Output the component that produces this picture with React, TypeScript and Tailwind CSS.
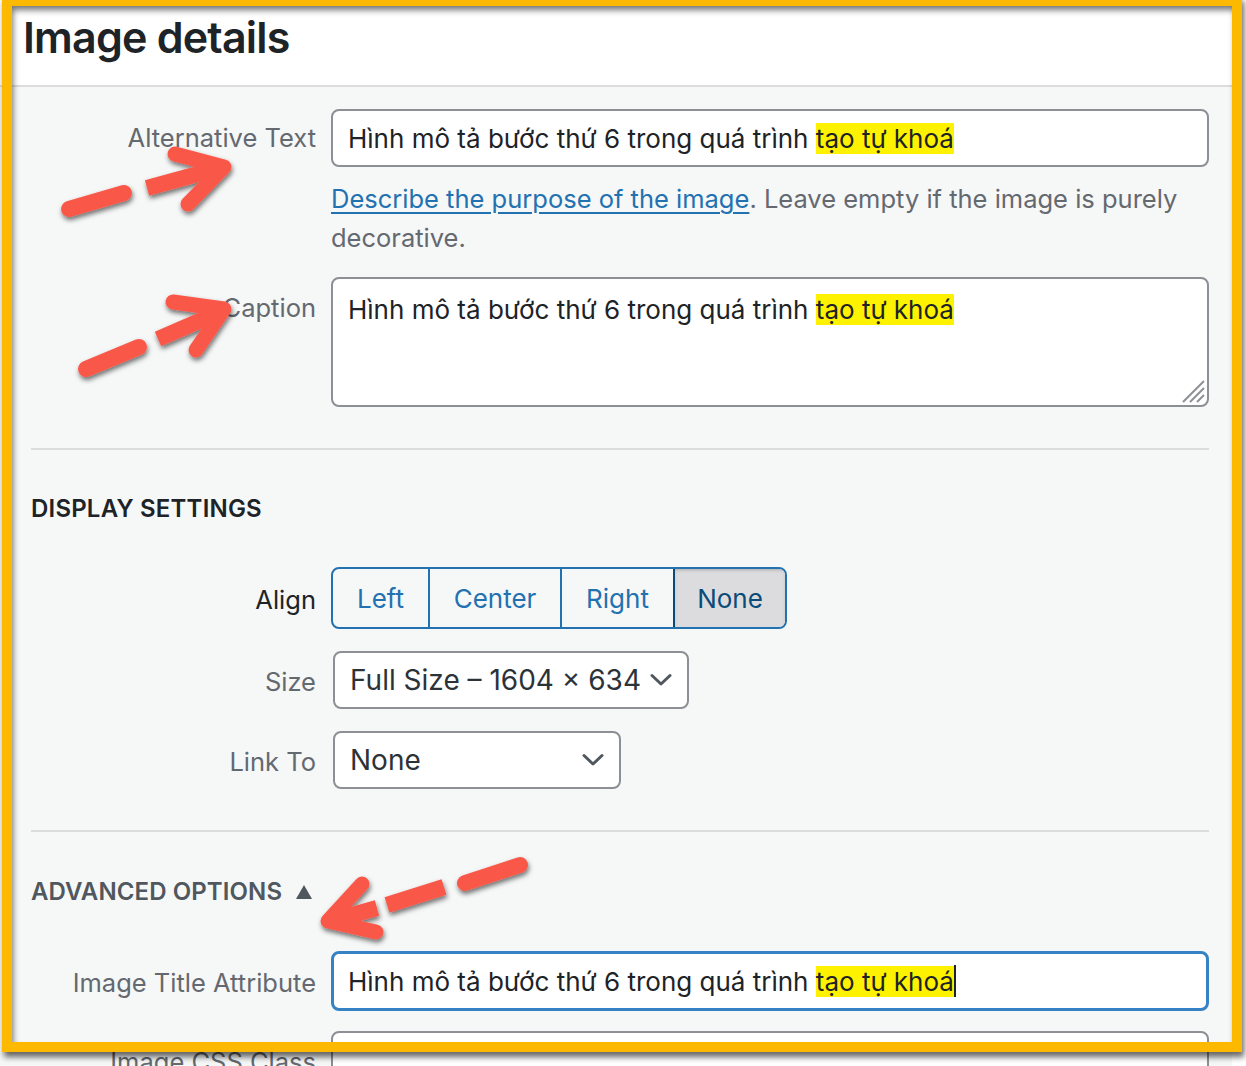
import type { ReactNode } from "react";

const font = "font-['Inter','Noto_Sans',sans-serif]";

function Mark({ children }: { children: ReactNode }) {
  return <span className="bg-[#fff200]">{children}</span>;
}

function Caption() {
  return (
    <span>
      Hình mô tả bước thứ 6 trong quá trình <Mark>tạo tự khoá</Mark>
    </span>
  );
}

function Row({ label, labelTop, children }: { label: string; labelTop?: boolean; children: ReactNode }) {
  return (
    <div className="flex items-start gap-[15px]">
      <div
        className={`w-[285px] shrink-0 text-right text-[25.5px] leading-[36px] text-[#646970] ${
          labelTop ? "pt-[13px]" : "h-[58px] flex items-center justify-end"
        }`}
      >
        {label}
      </div>
      <div className="flex-1 min-w-0">{children}</div>
    </div>
  );
}

function Chevron() {
  return (
    <svg width="22" height="14" viewBox="0 0 22 14" fill="none">
      <path d="M2 2.5 L11 11 L20 2.5" stroke="#50575e" strokeWidth="3" strokeLinecap="round" strokeLinejoin="round" />
    </svg>
  );
}

function Arrows() {
  const red = "#f9594a";
  return (
    <svg className="absolute inset-0 pointer-events-none" width="1246" height="1066" viewBox="0 0 1246 1066">
      <defs>
        <filter id="sh" x="-20%" y="-20%" width="140%" height="160%">
          <feDropShadow dx="1" dy="3" stdDeviation="2.5" floodColor="#000" floodOpacity="0.55" />
        </filter>
      </defs>
      <g filter="url(#sh)" stroke={red} fill="none" strokeWidth="16">
        {/* alt text */}
        <line x1="69" y1="209" x2="124" y2="193" strokeLinecap="round" />
        <line x1="147" y1="188" x2="220" y2="168" />
        <polyline points="175,154 224,167 188,204" strokeLinejoin="round" strokeLinecap="round" strokeWidth="15" />
        {/* caption */}
        <line x1="86" y1="369" x2="139" y2="347" strokeLinecap="round" />
        <line x1="158" y1="339" x2="220" y2="312" />
        <polyline points="173,302 224,309 196,350" strokeLinejoin="round" strokeLinecap="round" strokeWidth="15" />
        {/* advanced */}
        <line x1="520" y1="865" x2="465" y2="883" strokeLinecap="round" />
        <line x1="444" y1="887" x2="387" y2="905" />
        <line x1="377" y1="908" x2="334" y2="920" />
        <polyline points="362,884 328,921 376,932" strokeLinejoin="round" strokeLinecap="round" strokeWidth="15" />
      </g>
    </svg>
  );
}

export default function App() {
  return (
    <div className={`relative w-[1246px] h-[1066px] overflow-hidden bg-white ${font}`}>
      <div className="w-[1232px]">
        {/* Header */}
        <div className="h-[87px] bg-white border-b-2 border-[#dcdcde] pl-[23px] pt-[15px]">
          <h1 className="text-[43px] leading-[44px] font-semibold text-[#1d2327] tracking-[-0.8px]">Image details</h1>
        </div>

        {/* Body */}
        <div className="bg-[#f6f7f7] pl-[31px] pr-[23px] pt-[22px] pb-[40px]">
          <Row label="Alternative Text">
            <div className="h-[58px] bg-white border-2 border-[#8c8f94] rounded-[8px] px-[15px] flex items-center text-[26px] text-[#1d2327] whitespace-nowrap">
              <Caption />
            </div>
            <p className="mt-[12px] text-[25.5px] leading-[39px] text-[#646970]">
              <a className="text-[#2271b1] underline underline-offset-[4px]">Describe the purpose of the image</a>. Leave empty if the image is purely decorative.
            </p>
          </Row>

          <div className="mt-[20px]">
            <Row label="Caption" labelTop>
              <div className="relative h-[130px] bg-white border-2 border-[#8c8f94] rounded-[8px] px-[15px] pt-[13px] text-[26px] leading-[36px] text-[#1d2327] whitespace-nowrap">
                <Caption />
                <svg className="absolute right-[2px] bottom-[2px]" width="26" height="26" viewBox="0 0 26 26">
                  <g stroke="#8c8f94" strokeWidth="2">
                    <line x1="4" y1="25" x2="25" y2="4" />
                    <line x1="11" y1="25" x2="25" y2="11" />
                    <line x1="18" y1="25" x2="25" y2="18" />
                  </g>
                </svg>
              </div>
            </Row>
          </div>

          <div className="mt-[41px] h-[2px] bg-[#dcdcde]" />

          <h2 className="mt-[43px] text-[24px] leading-[32px] font-semibold text-[#1d2327] tracking-[0.2px]">DISPLAY SETTINGS</h2>

          <div className="mt-[42px] flex items-center gap-[15px]">
            <div className="w-[285px] pt-[3px] text-right text-[25.5px] leading-[36px] text-[#1d2327]">Align</div>
            <div className="flex h-[62px] border-2 border-[#2271b1] rounded-[8px] overflow-hidden text-[26px] text-[#2271b1]">
              <div className="w-[95px] flex items-center justify-center">Left</div>
              <div className="w-[132px] flex items-center justify-center border-l-2 border-[#2271b1]">Center</div>
              <div className="w-[113px] flex items-center justify-center border-l-2 border-[#2271b1]">Right</div>
              <div className="w-[112px] flex items-center justify-center border-l-2 border-[#0a4b78] bg-[#dcdcde] text-[#0a4b78] shadow-[inset_0_2px_5px_-3px_rgba(0,0,0,0.5)]">None</div>
            </div>
          </div>

          <div className="mt-[22px] flex items-center gap-[17px]">
            <div className="w-[285px] pt-[3px] text-right text-[25.5px] leading-[36px] text-[#646970]">Size</div>
            <div className="w-[356px] h-[58px] bg-white border-2 border-[#8c8f94] rounded-[8px] pl-[15px] pr-[15px] flex items-center justify-between text-[28px] text-[#2c3338]">
              <span>Full Size – 1604 × 634</span>
              <Chevron />
            </div>
          </div>

          <div className="mt-[22px] flex items-center gap-[17px]">
            <div className="w-[285px] pt-[3px] text-right text-[25.5px] leading-[36px] text-[#646970]">Link To</div>
            <div className="w-[288px] h-[58px] bg-white border-2 border-[#8c8f94] rounded-[8px] pl-[15px] pr-[15px] flex items-center justify-between text-[28px] text-[#2c3338]">
              <span>None</span>
              <Chevron />
            </div>
          </div>

          <div className="mt-[41px] h-[2px] bg-[#dcdcde]" />

          <h2 className="mt-[44px] flex items-center gap-[14px] text-[24px] leading-[32px] font-semibold text-[#50575e] tracking-[0.1px]">
            ADVANCED OPTIONS
            <svg width="16" height="14" viewBox="0 0 16 14">
              <path d="M8 0 L16 14 L0 14 Z" fill="#50575e" />
            </svg>
          </h2>

          <div className="mt-[43px] flex items-center gap-[15px]">
            <div className="w-[285px] pt-[3px] text-right text-[25.5px] leading-[36px] text-[#646970]">Image Title Attribute</div>
            <div className="flex-1 h-[60px] bg-white border-[3px] border-[#3582c4] rounded-[8px] px-[14px] flex items-center text-[26px] text-[#1d2327] whitespace-nowrap">
              <Caption />
              <span className="inline-block w-[2px] h-[32px] bg-[#1d2327]" />
            </div>
          </div>

          <div className="mt-[20px] flex items-center gap-[15px]">
            <div className="w-[285px] pt-[3px] text-right text-[25.5px] leading-[36px] text-[#646970]">Image CSS Class</div>
            <div className="flex-1 h-[58px] bg-white border-2 border-[#8c8f94] rounded-[8px]" />
          </div>
        </div>
      </div>

      {/* highlight frame */}
      <div className="absolute left-[2px] top-[-4px] w-[1240px] h-[1056px] border-[10px] border-[#fdb900] shadow-[2px_5px_6px_rgba(0,0,0,0.6),inset_2px_5px_6px_-1px_rgba(0,0,0,0.55)] pointer-events-none" />

      <Arrows />
    </div>
  );
}
